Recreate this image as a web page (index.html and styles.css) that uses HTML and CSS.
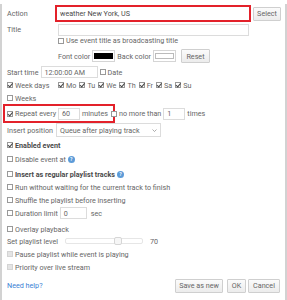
FILE: index.html
```html
<!DOCTYPE html>
<html lang="en">
<head>
  <meta charset="UTF-8">
  <title>Scheduled Event</title>
  <link rel="stylesheet" href="styles.css">
</head>
<body>
  <div class="dialog">

    <div class="row row-action">
      <span class="label label-action">Action</span>
      <span class="field field-action">weather New York, US</span>
      <span class="btn btn-select">Select</span>
    </div>

    <div class="row row-title">
      <span class="label">Title</span>
      <span class="field field-title"></span>
    </div>

    <div class="row row-usetitle indent">
      <span class="cb"></span><span class="text">Use event title as broadcasting title</span>
    </div>

    <div class="row row-colors indent">
      <span class="text">Font color</span>
      <span class="swatch"><span class="swatch-fill black"></span></span>
      <span class="text">Back color</span>
      <span class="swatch"><span class="swatch-fill"></span></span>
      <span class="btn btn-reset">Reset</span>
    </div>

    <div class="row row-start">
      <span class="text">Start time</span>
      <span class="field field-time">12:00:00 AM</span>
      <span class="cb"></span><span class="text">Date</span>
    </div>

    <div class="row row-week">
      <span class="label"><span class="cb on"></span><span class="text">Week days</span></span>
      <span class="day"><span class="cb on"></span>Mo</span>
      <span class="day"><span class="cb on"></span>Tu</span>
      <span class="day"><span class="cb on"></span>We</span>
      <span class="day"><span class="cb on"></span>Th</span>
      <span class="day"><span class="cb on"></span>Fr</span>
      <span class="day"><span class="cb on"></span>Sa</span>
      <span class="day"><span class="cb on"></span>Su</span>
    </div>

    <div class="row row-weeks">
      <span class="cb"></span><span class="text">Weeks</span>
    </div>

    <div class="row row-repeat">
      <span class="mark">
        <span class="cb on"></span><span class="text repeat-label">Repeat every</span>
        <span class="field field-small">60</span>
        <span class="text">minutes</span>
      </span>
      <span class="cb cb-over"></span><span class="text">no more than</span>
      <span class="field field-small">1</span>
      <span class="text">times</span>
    </div>

    <div class="row row-insert">
      <span class="label label-insert">Insert position</span>
      <span class="field field-select">Queue after playing track
        <svg class="chev" width="5" height="3" viewBox="0 0 5 3"><path d="M0.5 0.5 L2.5 2.5 L4.5 0.5" fill="none" stroke="#888" stroke-width="0.7"/></svg>
      </span>
    </div>

    <div class="row row-enabled">
      <span class="cb on"></span><span class="text bold">Enabled event</span>
    </div>

    <div class="row row-disable">
      <span class="cb"></span><span class="text">Disable event at</span><span class="help">?</span>
    </div>

    <div class="row row-regular">
      <span class="cb"></span><span class="text bold">Insert as regular playlist tracks</span><span class="help">?</span>
    </div>

    <div class="row row-run">
      <span class="cb"></span><span class="text">Run without waiting for the current track to finish</span>
    </div>

    <div class="row row-shuffle">
      <span class="cb"></span><span class="text">Shuffle the playlist before inserting</span>
    </div>

    <div class="row row-duration">
      <span class="cb"></span><span class="text">Duration limit</span>
      <span class="field field-dur">0</span>
      <span class="text">sec</span>
    </div>

    <div class="row row-overlay">
      <span class="cb"></span><span class="text">Overlay playback</span>
    </div>

    <div class="row row-level">
      <span class="text level-label">Set playlist level</span>
      <span class="slider"><span class="thumb" style="left: 63%"></span></span>
      <span class="text">70</span>
    </div>

    <div class="row row-pause">
      <span class="cb off"></span><span class="text">Pause playlist while event is playing</span>
    </div>

    <div class="row row-priority">
      <span class="cb off"></span><span class="text">Priority over live stream</span>
    </div>

    <div class="row row-footer">
      <a class="help-link" href="#">Need help?</a>
      <span class="btn btn-save">Save as new</span>
      <span class="btn btn-ok">OK</span>
      <span class="btn btn-cancel">Cancel</span>
    </div>

  </div>
</body>
</html>
```

FILE: styles.css
```css
body {
  margin: 0;
  font-family: Roboto, "Liberation Sans", sans-serif;
  font-size: 7.2px;
  color: #666;
  background: #fff;
}
.dialog {
  box-sizing: border-box;
  width: 287px;
  height: 299px;
  padding: 0 3px 0 5px;
  border: 2px solid #d2d2d2;
  border-top: none;
  background: #fff;
}
.row {
  display: flex;
  align-items: center;
  height: 13px;
  white-space: nowrap;
}
.indent {
  padding-left: 51px;
}
.label {
  display: flex;
  align-items: center;
  width: 51px;
  flex: none;
}
.label-action {
  width: 48px;
}
.label-insert {
  width: 49px;
}
.text {
  color: #666;
}
.bold {
  font-weight: bold;
  color: #4a4a4a;
}

/* fields */
.field {
  box-sizing: border-box;
  display: flex;
  align-items: center;
  height: 12px;
  padding: 0 3px;
  border: 1px solid #dcdcdc;
  color: #666;
  background: #fff;
}
.field-action {
  width: 196px;
  height: 17px;
  padding-left: 3px;
  border: 2px solid #e3212a;
  color: #4a4a4a;
}
.field-title {
  width: 191px;
}
.field-time {
  width: 57px;
  margin: 0 2px;
}
.field-small {
  width: 22px;
  margin: 0 2px;
}
.field-dur {
  width: 27px;
  margin: 0 4px 0 2px;
}
.field-select {
  position: relative;
  width: 105px;
  height: 14px;
}
.chev {
  position: absolute;
  right: 3px;
  top: 5px;
}

/* buttons */
.btn {
  box-sizing: border-box;
  display: flex;
  align-items: center;
  justify-content: center;
  height: 14px;
  border: 1px solid #cfcfcf;
  border-radius: 1px;
  background: linear-gradient(#fbfbfb, #ececec);
  color: #666;
}
.btn-select {
  width: 28px;
  margin-left: 2px;
}
.btn-reset {
  width: 29px;
  margin-left: 3px;
}

/* checkboxes */
.cb {
  box-sizing: border-box;
  position: relative;
  flex: none;
  width: 6px;
  height: 6px;
  margin-right: 2px;
  border: 1px solid #999;
  background: #fff;
}
.cb.on::after {
  content: "";
  position: absolute;
  left: 1px;
  top: -1px;
  width: 1.5px;
  height: 3.5px;
  border: solid #444;
  border-width: 0 1px 1px 0;
  transform: rotate(40deg);
}
.cb.off {
  border-color: #d4d4d4;
  background: #e4e4e4;
}
.day {
  display: flex;
  align-items: center;
  margin-right: 3px;
}

/* colors */
.swatch {
  box-sizing: border-box;
  display: flex;
  align-items: center;
  justify-content: center;
  width: 23px;
  height: 12px;
  margin: 0 2px;
  border: 1px solid #d5d5d5;
}
.swatch-fill {
  width: 19px;
  height: 6px;
  border: 1px solid #bbb;
  box-sizing: border-box;
}
.swatch-fill.black {
  background: #000;
  border-color: #000;
}

/* repeat */
.mark {
  box-sizing: border-box;
  display: flex;
  align-items: center;
  height: 19px;
  margin-left: -4px;
  padding: 0 5px 0 2px;
  border: 2px solid #e3212a;
}
.cb-over {
  margin-left: -4px;
}

/* help */
.help {
  display: inline-flex;
  align-items: center;
  justify-content: center;
  width: 7px;
  height: 7px;
  margin-left: 2px;
  border-radius: 50%;
  background: #5c9bd8;
  color: #fff;
  font-size: 5px;
  font-weight: bold;
}

/* slider */
.level-label {
  width: 58px;
}
.slider {
  position: relative;
  box-sizing: border-box;
  width: 78px;
  height: 6px;
  margin-right: 7px;
  border: 1px solid #e6e6e6;
  border-radius: 2px;
}
.thumb {
  position: absolute;
  top: -2px;
  width: 8px;
  height: 8px;
  box-sizing: border-box;
  border: 1px solid #d6d6d6;
  border-radius: 2px;
  background: #f6f6f6;
}

/* row spacing */
.row-action { height: 19px; margin-top: 4px; }
.row-title { height: 13px; }
.row-usetitle { height: 9px; }
.row-colors { height: 16px; margin-top: 3px; }
.row-start { height: 14px; margin-top: 1px; }
.row-week { height: 12px; }
.row-weeks { height: 12px; margin-top: 1px; }
.row-repeat { height: 19px; }
.row-insert { height: 14px; }
.row-enabled { height: 14px; margin-top: 1px; }
.row-disable { height: 14px; }
.row-regular { height: 14px; margin-top: 1px; }
.row-run { height: 12px; }
.row-shuffle { height: 12px; margin-top: 1px; }
.row-duration { height: 12px; margin-top: 1px; }
.row-overlay { height: 12px; margin-top: 4px; }
.row-level { height: 12px; }
.row-pause { height: 12px; margin-top: 1px; }
.row-priority { height: 12px; margin-top: 1px; }
.row-footer { height: 15px; margin-top: 5px; }

/* footer */
.help-link {
  flex: 1;
  color: #3a7fd4;
  text-decoration: none;
}
.btn-save {
  width: 48px;
}
.btn-ok {
  width: 19px;
  margin-left: 4px;
}
.btn-cancel {
  width: 32px;
  margin-left: 2px;
  margin-right: 2px;
}
```
